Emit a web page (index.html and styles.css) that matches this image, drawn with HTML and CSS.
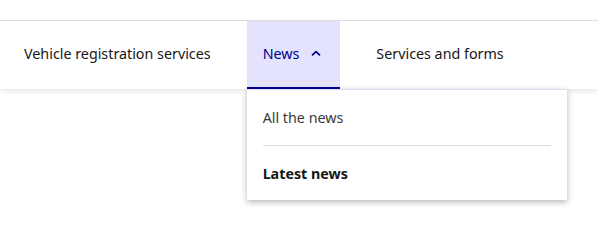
FILE: index.html
```html
<html>
<head>
    <title>Navigation</title>
    <link rel="stylesheet" href="styles.css">
</head>
<body>
    <nav class="nav">
        <ul class="nav-list">
            <li class="nav-item"><a class="nav-link" href="#">Vehicle registration services</a></li>
            <li class="nav-item open">
                <button type="button" class="nav-link nav-btn" aria-expanded="true">
                    News
                    <svg class="chevron" width="16" height="16" viewBox="0 0 16 16" aria-hidden="true">
                        <path d="M4 10.4 L8 6.6 L12 10.4" fill="none" stroke="currentColor" stroke-width="1.7"/>
                    </svg>
                </button>
                <div class="menu">
                    <a class="menu-link" href="#">All the news</a>
                    <a class="menu-link current" href="#">Latest news</a>
                </div>
            </li>
            <li class="nav-item"><a class="nav-link" href="#">Services and forms</a></li>
        </ul>
    </nav>
</body>
</html>
```

FILE: styles.css
```css
body {
    margin: 0;
    padding-top: 20px;
    background-color: white;
    font-family: "Noto Sans", sans-serif;
    color: #161616;
}
.nav {
    border-top: 1px solid #dddddd;
    box-shadow: 0 3px 4px rgba(0, 0, 0, 0.08);
}
.nav-list {
    display: flex;
    gap: 20px;
    list-style: none;
    margin: 0;
    padding: 0 0 0 8px;
    height: 68px;
}
.nav-item {
    position: relative;
    display: flex;
}
.nav-link {
    display: flex;
    align-items: center;
    padding: 0 16px 4px 16px;
    font-size: 14.3px;
    color: #161616;
    text-decoration: none;
    border: none;
    background: none;
    font-family: inherit;
}
.open .nav-btn {
    background-color: #e3e3fd;
    color: #000091;
    box-shadow: inset 0 -2px 0 #000091;
}
.chevron {
    margin-left: 9px;
}
.menu {
    position: absolute;
    top: 68px;
    left: 0;
    width: 320px;
    background-color: white;
    border-top: 1px solid #dcdcf8;
    box-shadow: 0 2px 6px rgba(0, 0, 0, 0.3);
    padding: 0 16px;
    box-sizing: border-box;
    z-index: 10;
}
.menu-link {
    display: flex;
    align-items: center;
    height: 55px;
    box-sizing: border-box;
    font-size: 14.3px;
    color: #3a3a3a;
    text-decoration: none;
}
.menu-link + .menu-link {
    border-top: 1px solid #dddddd;
}
.menu-link.current {
    font-weight: bold;
    color: #161616;
}
```
